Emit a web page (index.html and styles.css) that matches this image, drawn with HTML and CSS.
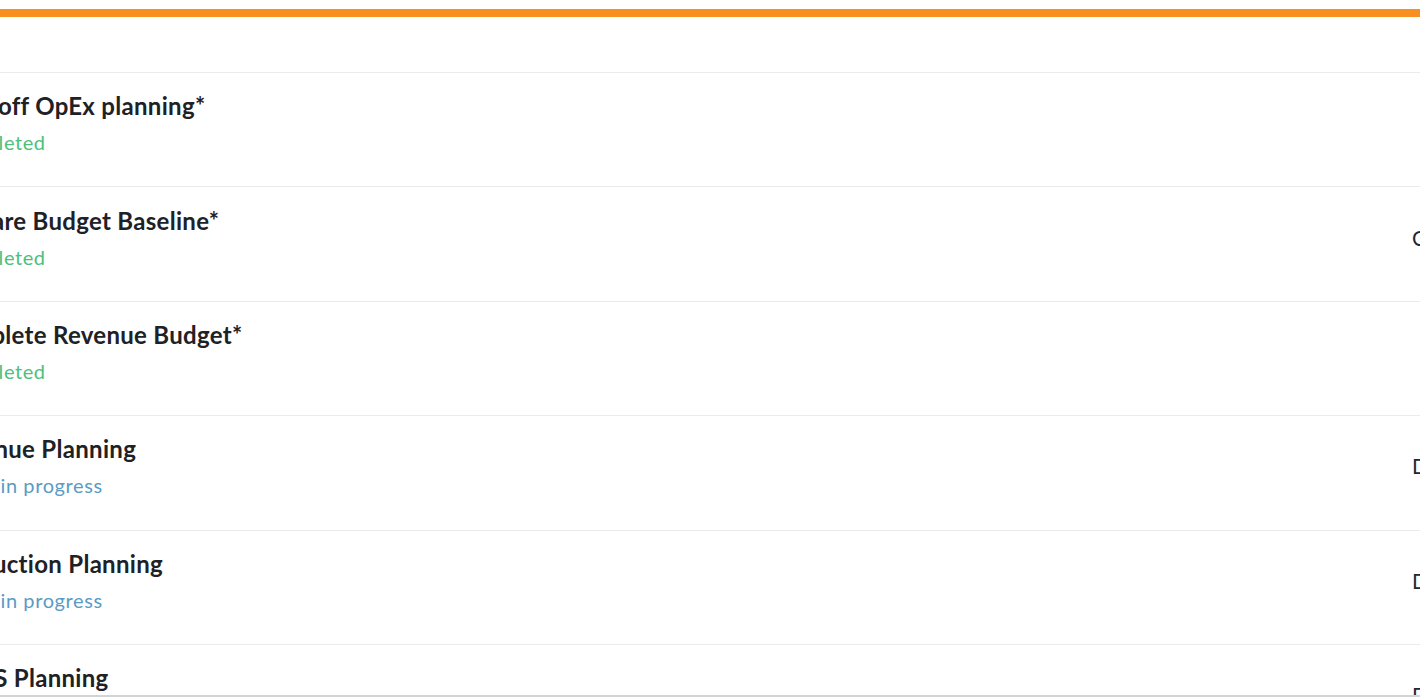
FILE: index.html
```
<!DOCTYPE html>
<html>
<head>
    <title>Planning Tasks</title>
    <link rel="stylesheet" href="styles.css">
</head>
<body>
    <div class="board">
        <div class="board-header"></div>

        <div class="task">
            <div class="task-info">
                <div class="task-title">Kick-off OpEx planning*</div>
                <div class="task-status done">Completed</div>
            </div>
            <div class="task-meta"></div>
        </div>

        <div class="task">
            <div class="task-info">
                <div class="task-title">Prepare Budget Baseline*</div>
                <div class="task-status done">Completed</div>
            </div>
            <div class="task-meta">Completed on Mar 12</div>
        </div>

        <div class="task">
            <div class="task-info">
                <div class="task-title">Complete Revenue Budget*</div>
                <div class="task-status done">Completed</div>
            </div>
            <div class="task-meta"></div>
        </div>

        <div class="task">
            <div class="task-info">
                <div class="task-title">Revenue Planning</div>
                <div class="task-status progress">Work in progress</div>
            </div>
            <div class="task-meta">Due Apr 15</div>
        </div>

        <div class="task">
            <div class="task-info">
                <div class="task-title">Production Planning</div>
                <div class="task-status progress">Work in progress</div>
            </div>
            <div class="task-meta">Due Apr 22</div>
        </div>

        <div class="task">
            <div class="task-info">
                <div class="task-title">COGS Planning</div>
                <div class="task-status progress">Work in progress</div>
            </div>
            <div class="task-meta">Due Apr 30</div>
        </div>
    </div>
    <div class="page-edge"></div>
</body>
</html>
```

FILE: styles.css
```
html, body {
    margin: 0;
    height: 700px;
    overflow: hidden;
    background: #ffffff;
}

body {
    font-family: Lato, "Open Sans", sans-serif;
    color: #1e2126;
    padding-top: 9px;
    box-sizing: border-box;
    position: relative;
}

.board {
    width: 1700px;
    margin-left: -59px;
    border-top: 8px solid #f7901e;
}

.board-header {
    height: 55px;
}

.task {
    display: grid;
    grid-template-columns: 1471px 1fr;
    align-items: center;
    height: 114.4px;
    box-sizing: border-box;
    border-top: 1px solid #ebebeb;
}

.task-info {
    padding-bottom: 13px;
}

.task-title {
    font-size: 24px;
    font-weight: bold;
    line-height: 30px;
    letter-spacing: 0.3px;
}

.task-status {
    font-size: 20px;
    line-height: 26px;
    margin-top: 8px;
    padding-left: 3px;
    letter-spacing: 0.6px;
}

.done {
    color: #4dc07c;
}

.progress {
    color: #5a9bc5;
}

.task-meta {
    font-size: 21px;
    color: #24272d;
    white-space: nowrap;
    padding-bottom: 14px;
}

.page-edge {
    position: absolute;
    left: 0;
    right: 0;
    top: 695px;
    height: 5px;
    background: #ffffff;
    border-top: 2px solid #d4d4d4;
}
```
